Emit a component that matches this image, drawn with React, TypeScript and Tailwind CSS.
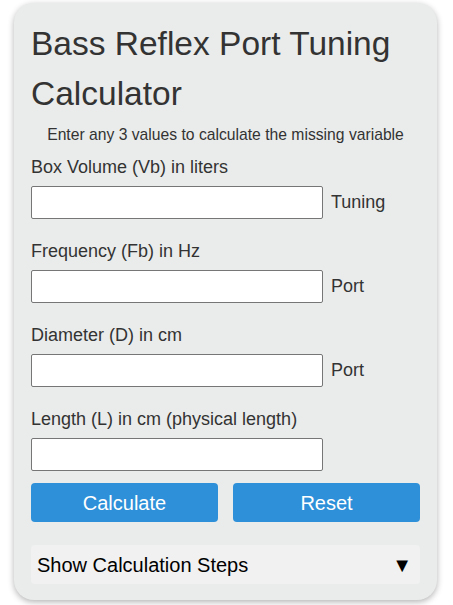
import React, { useState } from 'react';

const fields = [
  { id: 'vb', label: 'Box Volume (Vb) in liters', side: 'Tuning' },
  { id: 'fb', label: 'Frequency (Fb) in Hz', side: 'Port' },
  { id: 'd', label: 'Diameter (D) in cm', side: 'Port' },
  { id: 'l', label: 'Length (L) in cm (physical length)', side: '' },
];

const App = () => {
  const [values, setValues] = useState<Record<string, string>>({ vb: '', fb: '', d: '', l: '' });
  const [open, setOpen] = useState(false);

  const handleChange = (event: React.ChangeEvent<HTMLInputElement>) => {
    const { name, value } = event.target;
    setValues({ ...values, [name]: value });
  };

  return (
    <div className="min-h-screen bg-white pt-[3px] font-['Liberation_Sans',Arial,sans-serif]">
      <div className="ml-[14px] w-[423px] rounded-[20px] bg-[#eaeceb] px-[17px] pt-[16px] pb-[16px] shadow-[0_2px_6px_rgba(0,0,0,0.3)]">
        <h1 className="text-[33.5px] leading-[50px] text-[#333333]">Bass Reflex Port Tuning Calculator</h1>
        <p className="mt-[4px] text-center text-[15.7px] leading-[24px] text-[#333333]">
          Enter any 3 values to calculate the missing variable
        </p>

        <div className="mt-[8px]">
          {fields.map((f, i) => (
            <div key={f.id} className={i === fields.length - 1 ? 'mb-[12px]' : 'mb-[20px]'}>
              <label htmlFor={f.id} className="mb-[7px] block text-[18px] leading-[24px] text-[#333333]">
                {f.label}
              </label>
              <div className="flex items-center">
                <input
                  id={f.id}
                  name={f.id}
                  type="number"
                  value={values[f.id]}
                  onChange={handleChange}
                  className="h-[33px] w-[292px] rounded-[2px] border border-[#767676] bg-white px-2 text-[16px] outline-none"
                />
                {f.side && <span className="ml-[8px] text-[18px] text-[#333333]">{f.side}</span>}
              </div>
            </div>
          ))}
        </div>

        <div className="flex gap-[15px]">
          <button className="h-[39px] flex-1 rounded-[4px] bg-[#2e90d8] text-[20px] text-white">Calculate</button>
          <button
            className="h-[39px] flex-1 rounded-[4px] bg-[#2e90d8] text-[20px] text-white"
            onClick={() => setValues({ vb: '', fb: '', d: '', l: '' })}
          >
            Reset
          </button>
        </div>

        <button
          className="mt-[23px] flex h-[39px] w-full items-center justify-between rounded-[4px] bg-[#f1f1f1] pl-[6px] pr-[8px] text-[20px] text-black"
          onClick={() => setOpen(!open)}
        >
          <span>Show Calculation Steps</span>
          <span>▼</span>
        </button>
      </div>
    </div>
  );
};

export default App;
